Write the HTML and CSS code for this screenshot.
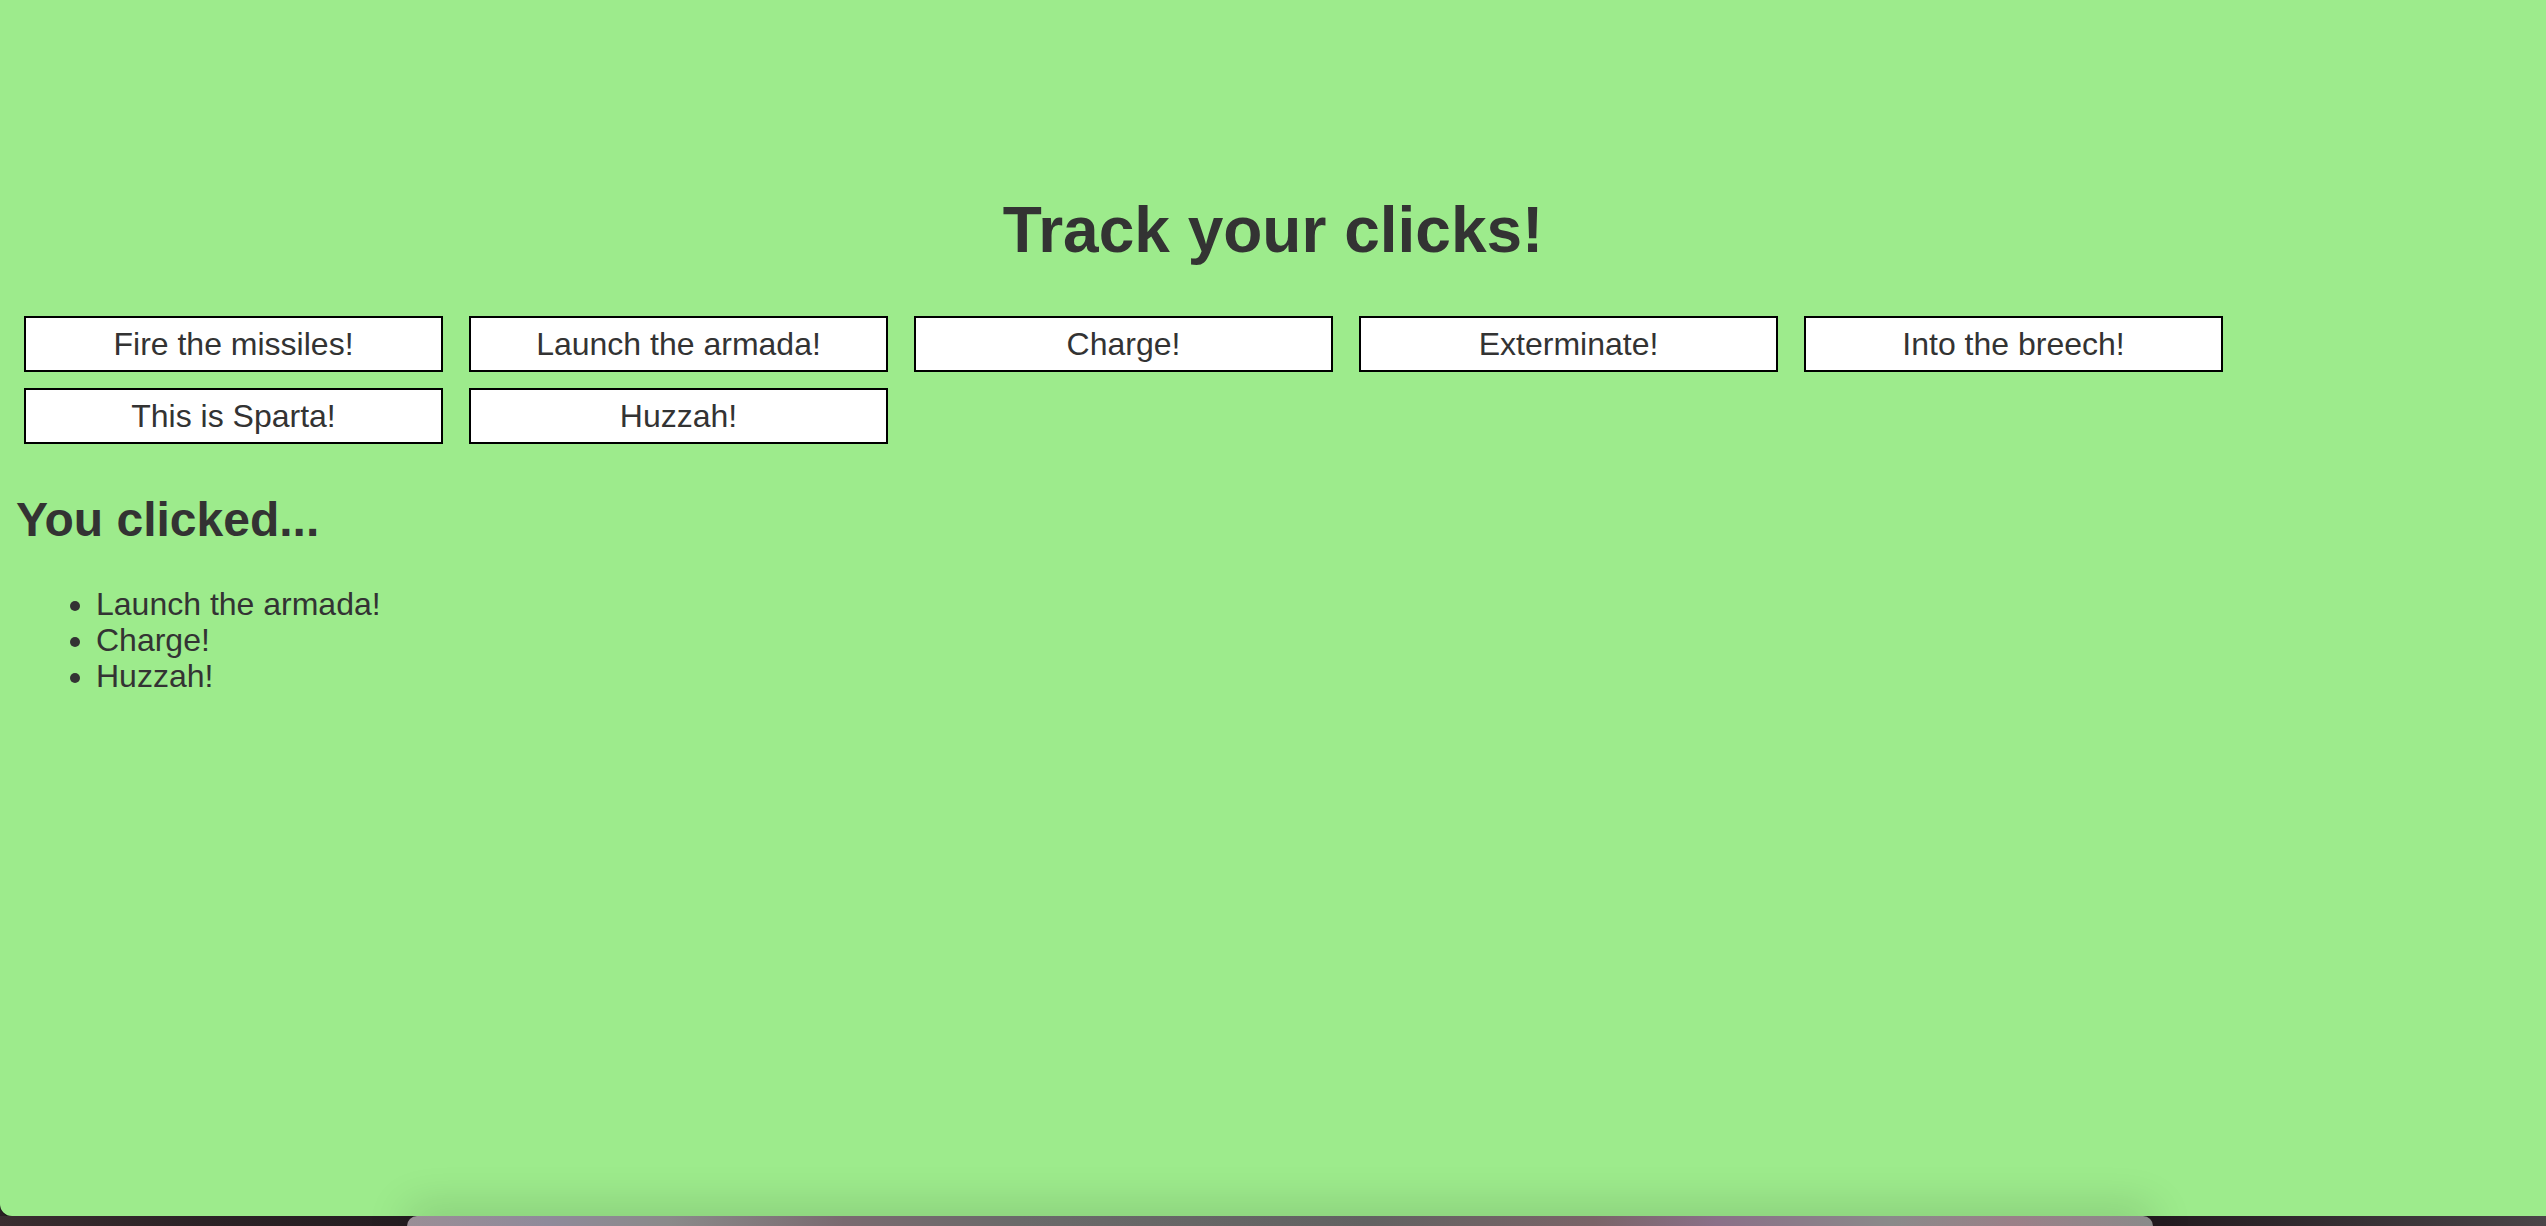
FILE: index.html
```html
<!DOCTYPE html>
<html lang="en">
<head>
<meta charset="utf-8">
<title>Track your clicks!</title>
<link rel="stylesheet" href="styles.css">
</head>
<body>
<div class="screen">
  <main class="window">
    <h1 class="title">Track your clicks!</h1>
    <div class="buttons">
      <button class="btn">Fire the missiles!</button>
      <button class="btn">Launch the armada!</button>
      <button class="btn">Charge!</button>
      <button class="btn">Exterminate!</button>
      <button class="btn">Into the breech!</button>
      <button class="btn">This is Sparta!</button>
      <button class="btn">Huzzah!</button>
    </div>
    <h2 class="subtitle">You clicked...</h2>
    <ul class="clicked">
      <li>Launch the armada!</li>
      <li>Charge!</li>
      <li>Huzzah!</li>
    </ul>
  </main>
  <div class="desktop">
    <div class="dock"></div>
  </div>
</div>
</body>
</html>
```

FILE: styles.css
```css
html, body {
  margin: 0;
  padding: 0;
}

body {
  font-family: "Liberation Sans", Arial, Helvetica, sans-serif;
  color: #333333;
  background: #2a2024;
}

.screen {
  height: 1226px;
  display: flex;
  flex-direction: column;
  overflow: hidden;
  position: relative;
}

.window {
  flex: 1;
  background: #9deb8c;
  padding: 0 16px;
  border-bottom-left-radius: 12px;
  box-shadow: 0 1px 0 #141012;
  position: relative;
  z-index: 0;
}

.title {
  margin: 193px 0 41px;
  font-size: 64px;
  line-height: 74px;
  font-weight: 700;
  text-align: center;
}

.buttons {
  display: flex;
  flex-wrap: wrap;
  gap: 16px 26px;
  padding: 8px;
}

.btn {
  width: 419px;
  height: 56px;
  box-sizing: border-box;
  margin: 0;
  padding: 0;
  border: 2px solid #000000;
  border-radius: 0;
  background: #ffffff;
  color: #333333;
  font-family: "Liberation Sans", Arial, Helvetica, sans-serif;
  font-size: 32px;
  line-height: 36px;
}

.subtitle {
  margin: 40px 0 39px;
  font-size: 48px;
  line-height: 55px;
  font-weight: 700;
}

.clicked {
  margin: 0;
  padding-left: 80px;
  font-size: 32px;
  line-height: 36px;
}

.desktop {
  height: 10px;
  flex: none;
  position: relative;
  background: linear-gradient(90deg, #3a2d30 0%, #2c2226 8%, #221a1e 20%, #2b2024 60%, #241b20 85%, #4a4548 100%);
}

.dock {
  position: absolute;
  left: 407px;
  width: 1746px;
  top: 0;
  height: 30px;
  border-radius: 10px 10px 0 0;
  background: linear-gradient(90deg, #9a8e96 0%, #8f8a9a 8%, #8a8a8a 15%, #7a6a70 25%, #6a6a6a 35%, #626262 55%, #7a6468 68%, #8a7088 75%, #8a8a8a 85%, #9a8088 92%, #8a8a8a 100%);
  box-shadow: 0 -8px 44px rgba(0, 0, 0, 0.16);
  z-index: 1;
}
```
